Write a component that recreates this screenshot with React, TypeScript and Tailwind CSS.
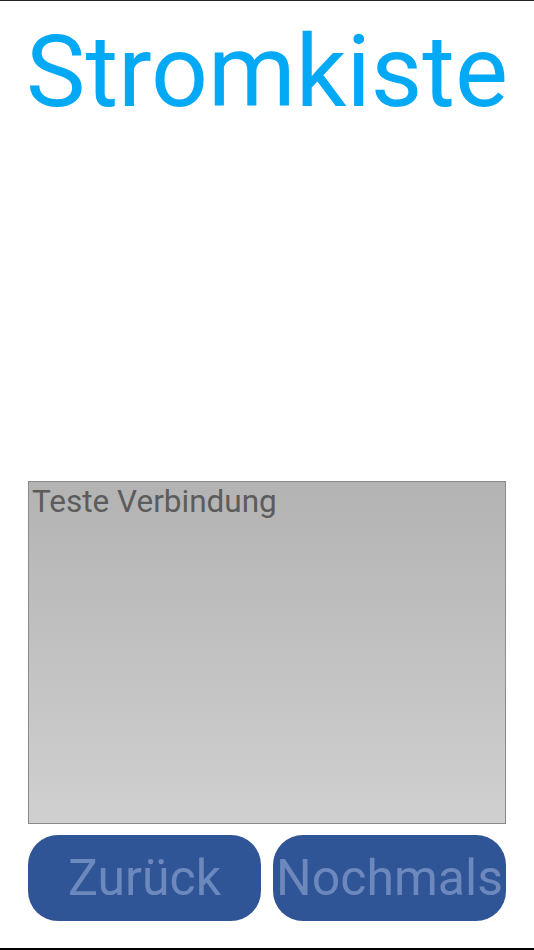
export default function App() {
  return (
    <div className="flex h-[950px] w-[534px] flex-col border-t border-b-2 border-t-[#222] border-b-black bg-white font-['Roboto',sans-serif]">
      <h1 className="mt-[1px] h-[143px] whitespace-nowrap pl-[26px] text-[100px] leading-[140px] font-normal text-[#03a9f4]">Stromkiste</h1>
      <div className="flex-1" />
      <div className="mx-[28px] h-[343px] border border-[#8a8a8a] bg-gradient-to-b from-[#b3b3b3] to-[#d0d0d0] px-[3px] py-[1px]">
        <div className="text-[31.5px] leading-[38px] text-[#5c5c5c]">Teste Verbindung</div>
      </div>
      <div className="mx-[28px] mt-[11px] mb-[27px] grid grid-cols-2 gap-[12px]">
        <button type="button" className="flex h-[86px] items-center justify-center rounded-[30px] bg-[#305597] text-[50px] text-[#6c88bc]">
          Zurück
        </button>
        <button type="button" className="flex h-[86px] items-center justify-center overflow-visible whitespace-nowrap rounded-[30px] bg-[#305597] text-[50px] text-[#6c88bc]">
          Nochmals
        </button>
      </div>
    </div>
  )
}
